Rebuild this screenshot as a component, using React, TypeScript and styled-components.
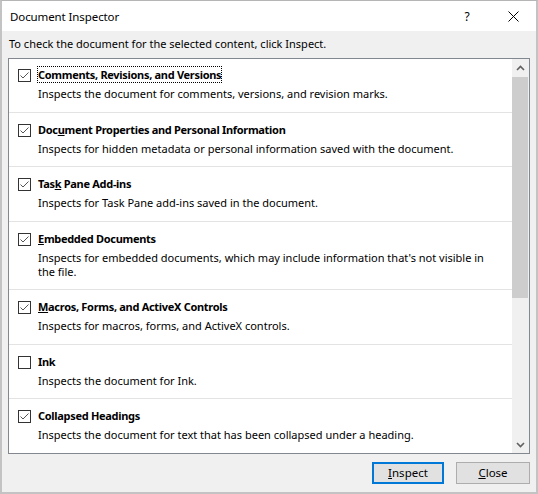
import React from "react";
import styled, { createGlobalStyle } from "styled-components";

const Global = createGlobalStyle`
  html, body { margin: 0; padding: 0; background: #ffffff; }
  body { font-family: "Noto Sans", "Open Sans", Arial, sans-serif; font-size: 11px; color: #000; }
  * { box-sizing: border-box; }
`;

const Window = styled.div`
  width: 538px;
  height: 494px;
  display: flex;
  flex-direction: column;
  border: 2px solid #c3c3c3;
  border-top: 1px solid #b5b5b5;
  background: #f0f0f0;
  overflow: hidden;
`;

const TitleBar = styled.div`
  height: 30px;
  flex: none;
  display: flex;
  align-items: center;
  background: #ffffff;
  padding-left: 8px;
`;

const TitleText = styled.div`
  flex: 1;
  font-size: 11.5px;
  letter-spacing: -0.1px;
`;

const TitleButton = styled.div<{ $w: number }>`
  width: ${(p) => p.$w}px;
  height: 30px;
  display: flex;
  align-items: center;
  justify-content: center;
  font-size: 12px;
`;

const Body = styled.div`
  flex: 1;
  display: flex;
  flex-direction: column;
  padding: 5px 6px 0 6px;
`;

const Instruction = styled.div`
  line-height: 16px;
  height: 16px;
  padding-left: 1px;
  font-size: 11px;
`;

const ListBox = styled.div`
  margin-top: 6px;
  height: 396px;
  flex: none;
  display: flex;
  border: 1px solid #828790;
  background: #ffffff;
  overflow: hidden;
`;

const Items = styled.div`
  flex: 1;
  overflow: hidden;
`;

const Item = styled.div<{ $pt: number; $pb: number; $last?: boolean }>`
  display: grid;
  grid-template-columns: 13px 1fr;
  column-gap: 7px;
  padding: ${(p) => p.$pt}px 12px ${(p) => p.$pb}px 9px;
  border-bottom: 1px solid ${(p) => (p.$last ? "transparent" : "#e3e3e3")};
`;

const ItemTitle = styled.div`
  line-height: 16px;
  font-weight: 700;
  letter-spacing: -0.3px;
`;

const Focus = styled.span`
  outline: 1px dotted #000;
  outline-offset: 0px;
`;

const Desc = styled.div`
  grid-column: 2;
  margin-top: 4px;
  line-height: 14px;
  letter-spacing: 0;
`;

const BoxWrap = styled.div`
  width: 13px;
  height: 13px;
  margin-top: 2px;
`;

const ScrollBar = styled.div`
  width: 17px;
  flex: none;
  display: flex;
  flex-direction: column;
  background: #f0f0f0;
`;

const Arrow = styled.div`
  height: 17px;
  flex: none;
  display: flex;
  align-items: center;
  justify-content: center;
`;

const Track = styled.div`
  flex: 1;
  padding: 1px 1px 0 0;
`;

const Thumb = styled.div`
  height: 221px;
  background: #cdcdcd;
`;

const Footer = styled.div`
  display: flex;
  justify-content: flex-end;
  gap: 12px;
  padding-top: 8px;
`;

const Button = styled.button<{ $primary?: boolean }>`
  height: 22px;
  width: ${(p) => (p.$primary ? 72 : 74)}px;
  font-family: inherit;
  font-size: 11.5px;
  line-height: 16px;
  color: #000;
  background: #e1e1e1;
  border: ${(p) => (p.$primary ? "2px solid #0078d7" : "1px solid #adadad")};
  padding: 0;
`;

const Check = ({ checked }: { checked: boolean }) => (
  <BoxWrap>
    <svg width="13" height="13" viewBox="0 0 13 13">
      <rect x="0.5" y="0.5" width="12" height="12" fill="#fff" stroke="#333" />
      {checked && (
        <polyline points="2.5,6.5 5,9 10.5,3.5" fill="none" stroke="#555" strokeWidth="1" />
      )}
    </svg>
  </BoxWrap>
);

type Entry = { title: React.ReactNode; desc: string; checked: boolean; pt: number; pb: number };

const entries: Entry[] = [
  { title: <Focus>Comments, Revisions, and Versions</Focus>, desc: "Inspects the document for comments, versions, and revision marks.", checked: true, pt: 8, pb: 11 },
  { title: <>Doc<u>u</u>ment Properties and Personal Information</>, desc: "Inspects for hidden metadata or personal information saved with the document.", checked: true, pt: 9, pb: 10 },
  { title: <>Tas<u>k</u> Pane Add-ins</>, desc: "Inspects for Task Pane add-ins saved in the document.", checked: true, pt: 9, pb: 11 },
  { title: <><u>E</u>mbedded Documents</>, desc: "Inspects for embedded documents, which may include information that's not visible in the file.", checked: true, pt: 9, pb: 10 },
  { title: <><u>M</u>acros, Forms, and ActiveX Controls</>, desc: "Inspects for macros, forms, and ActiveX controls.", checked: true, pt: 9, pb: 11 },
  { title: <>Ink</>, desc: "Inspects the document for Ink.", checked: false, pt: 9, pb: 10 },
  { title: <>Collapsed Headings</>, desc: "Inspects the document for text that has been collapsed under a heading.", checked: true, pt: 9, pb: 8 },
];

export default function App() {
  return (
    <>
      <Global />
      <Window>
        <TitleBar>
          <TitleText>Document Inspector</TitleText>
          <TitleButton $w={46}>?</TitleButton>
          <TitleButton $w={46}>
            <svg width="11" height="11" viewBox="0 0 11 11">
              <path d="M0.5 0.5 L10.5 10.5 M10.5 0.5 L0.5 10.5" stroke="#000" strokeWidth="1" />
            </svg>
          </TitleButton>
        </TitleBar>
        <Body>
          <Instruction>To check the document for the selected content, click Inspect.</Instruction>
          <ListBox>
            <Items>
              {entries.map((e, i) => (
                <Item key={i} $pt={e.pt} $pb={e.pb} $last={i === entries.length - 1}>
                  <Check checked={e.checked} />
                  <ItemTitle>{e.title}</ItemTitle>
                  <Desc>{e.desc}</Desc>
                </Item>
              ))}
            </Items>
            <ScrollBar>
              <Arrow>
                <svg width="9" height="6" viewBox="0 0 9 6">
                  <path d="M1 5 L4.5 1.5 L8 5" fill="none" stroke="#606060" strokeWidth="1.6" />
                </svg>
              </Arrow>
              <Track>
                <Thumb />
              </Track>
              <Arrow>
                <svg width="9" height="6" viewBox="0 0 9 6">
                  <path d="M1 1 L4.5 4.5 L8 1" fill="none" stroke="#606060" strokeWidth="1.6" />
                </svg>
              </Arrow>
            </ScrollBar>
          </ListBox>
          <Footer>
            <Button $primary><u>I</u>nspect</Button>
            <Button><u>C</u>lose</Button>
          </Footer>
        </Body>
      </Window>
    </>
  );
}
